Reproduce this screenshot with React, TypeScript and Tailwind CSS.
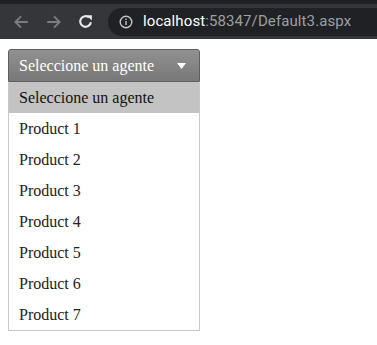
import React from "react";

const items = ["Product 1", "Product 2", "Product 3", "Product 4", "Product 5", "Product 6", "Product 7"];

function Toolbar() {
  return (
    <div className="h-[39px] bg-[#35363a] border-t-[4px] border-[#202124] flex items-center">
      {/* back */}
      <svg width="18" height="18" viewBox="0 0 16 16" className="ml-[12px]">
        <path d="M14 8H3M8 3L3 8l5 5" stroke="#7c7d80" strokeWidth="1.7" fill="none" />
      </svg>
      {/* forward */}
      <svg width="18" height="18" viewBox="0 0 16 16" className="ml-[15px]">
        <path d="M2 8h11M8 3l5 5-5 5" stroke="#7c7d80" strokeWidth="1.7" fill="none" />
      </svg>
      {/* reload */}
      <svg width="17" height="17" viewBox="0 0 16 16" className="ml-[14px]">
        <path d="M13 8.5A5 5 0 1 1 11.4 4.3" stroke="#e8eaed" strokeWidth="2" fill="none" />
        <path d="M9 2h5v5z" fill="#e8eaed" />
      </svg>
      <div className="ml-[14px] flex-1 h-[28px] bg-[#202124] rounded-l-full flex items-center">
        <svg width="14" height="14" viewBox="0 0 14 14" className="ml-[11px]">
          <circle cx="7" cy="7" r="5.8" stroke="#c4c6ca" strokeWidth="1.4" fill="none" />
          <rect x="6.3" y="6" width="1.4" height="4" fill="#c4c6ca" />
          <rect x="6.3" y="3.6" width="1.4" height="1.4" fill="#c4c6ca" />
        </svg>
        <span className="ml-[10px] text-[15px] font-['Roboto',sans-serif] tracking-[0.1px]">
          <span className="text-white">localhost</span>
          <span className="text-[#9aa0a6]">:58347/Default3.aspx</span>
        </span>
      </div>
    </div>
  );
}

export default function App() {
  return (
    <div className="w-[377px] h-[345px] bg-white overflow-hidden">
      <Toolbar />
      <div className="pt-[10px] pl-[8px] font-['Liberation_Serif',serif] text-[16px]">
        <div className="w-[192px]">
          <div className="h-[33px] rounded-t-[3px] border border-[#5e5e5e] bg-gradient-to-b from-[#919191] to-[#787878] flex items-center justify-between pl-[10px] pr-[13px] text-white">
            <span>Seleccione un agente</span>
            <svg width="9" height="6" viewBox="0 0 9 6">
              <path d="M0 0h9L4.5 6z" fill="#ffffff" />
            </svg>
          </div>
          <ul className="border border-[#c8c8c8] border-t-0">
            <li className="h-[31px] bg-[#c3c3c3] flex items-center pl-[10px] text-[#111]">Seleccione un agente</li>
            {items.map((p) => (
              <li key={p} className="h-[31px] flex items-center pl-[10px] text-[#222]">
                {p}
              </li>
            ))}
          </ul>
        </div>
      </div>
    </div>
  );
}
